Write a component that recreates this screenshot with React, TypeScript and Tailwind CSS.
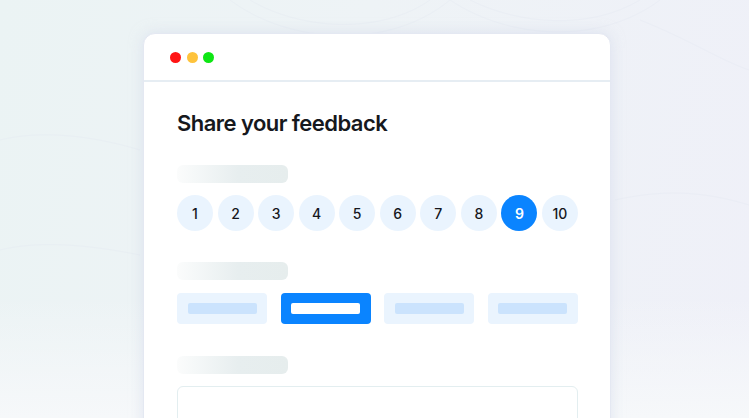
import React from "react";

export default function App() {
  const nums = [1, 2, 3, 4, 5, 6, 7, 8, 9, 10];
  const opts = [false, true, false, false];
  return (
    <div
      className="relative w-[749px] h-[418px] overflow-hidden bg-[linear-gradient(100deg,#ebf3f4_0%,#eef3f6_45%,#eff0f8_100%)]"
      style={{ fontFamily: "Inter, 'Noto Sans', sans-serif" }}
    >
      <div className="absolute inset-x-0 bottom-0 h-[120px] bg-[linear-gradient(to_bottom,rgba(245,247,250,0),#f6f8fa)]" />
      <svg className="absolute left-0 top-0" width="749" height="418" viewBox="0 0 749 418" fill="none">
        <g stroke="#e3e8f2" strokeWidth="1" opacity="0.35">
          <path d="M250 0 C 300 30, 380 35, 430 0" />
          <path d="M230 0 C 290 45, 390 50, 450 0" />
          <path d="M470 0 C 520 25, 590 30, 640 0" />
          <path d="M450 0 C 510 40, 600 45, 660 0" />
          <path d="M640 20 C 690 40, 720 60, 749 70" />
          <path d="M0 140 C 40 130, 90 135, 140 150" />
          <path d="M0 250 C 40 240, 90 245, 140 255" />
          <path d="M615 200 C 660 190, 700 190, 749 205" />
        </g>
      </svg>
      <div className="relative pt-[33px] pl-[143px]">
        <div className="w-[468px] h-[420px] bg-white rounded-t-[12px] border border-[#e4e8f2] shadow-[0_0_14px_rgba(205,214,232,0.55)]">
          <div className="h-[48px] border-b-2 border-[#e6edf3] flex items-center pl-[26px] gap-[5.5px]">
            <span className="w-[11px] h-[11px] rounded-full bg-[#ff1414]" />
            <span className="w-[11px] h-[11px] rounded-full bg-[#fec33c]" />
            <span className="w-[11px] h-[11px] rounded-full bg-[#0ee614]" />
          </div>
          <div className="px-[33px] pt-[27px]">
            <div className="text-[22px] leading-[28px] font-semibold text-[#16181d] tracking-[-0.025em]">
              Share your feedback
            </div>
            <div className="mt-[28px] w-[111px] h-[18px] rounded-[6px] bg-[linear-gradient(to_right,#fbfcfc,#e7eeef_55%,#e6eded)]" />
            <div className="mt-[12px] flex justify-between w-[401px]">
              {nums.map((n) => (
                <div
                  key={n}
                  className={
                    n === 9
                      ? "w-[36px] h-[36px] rounded-full bg-[#0a84ff] text-white font-semibold text-[14px] flex items-center justify-center"
                      : "w-[36px] h-[36px] rounded-full bg-[#eaf4fe] text-[#15171c] font-medium text-[14px] flex items-center justify-center"
                  }
                >
                  {n}
                </div>
              ))}
            </div>
            <div className="mt-[31px] w-[111px] h-[18px] rounded-[6px] bg-[linear-gradient(to_right,#fbfcfc,#e7eeef_55%,#e6eded)]" />
            <div className="mt-[13px] flex justify-between w-[401px]">
              {opts.map((sel, i) => (
                <div
                  key={i}
                  className={
                    sel
                      ? "w-[90px] h-[31px] rounded-[4px] bg-[#0a84ff] flex items-center justify-center"
                      : "w-[90px] h-[31px] rounded-[4px] bg-[#eaf4fe] flex items-center justify-center"
                  }
                >
                  <div className={sel ? "w-[69px] h-[11px] rounded-[2px] bg-white" : "w-[69px] h-[11px] rounded-[2px] bg-[#cbe3fd]"} />
                </div>
              ))}
            </div>
            <div className="mt-[32px] w-[111px] h-[18px] rounded-[6px] bg-[linear-gradient(to_right,#fbfcfc,#e7eeef_55%,#e6eded)]" />
            <div className="mt-[12px] w-[401px] h-[80px] rounded-[6px] border border-[#e3eef0]" />
          </div>
        </div>
      </div>
    </div>
  );
}
